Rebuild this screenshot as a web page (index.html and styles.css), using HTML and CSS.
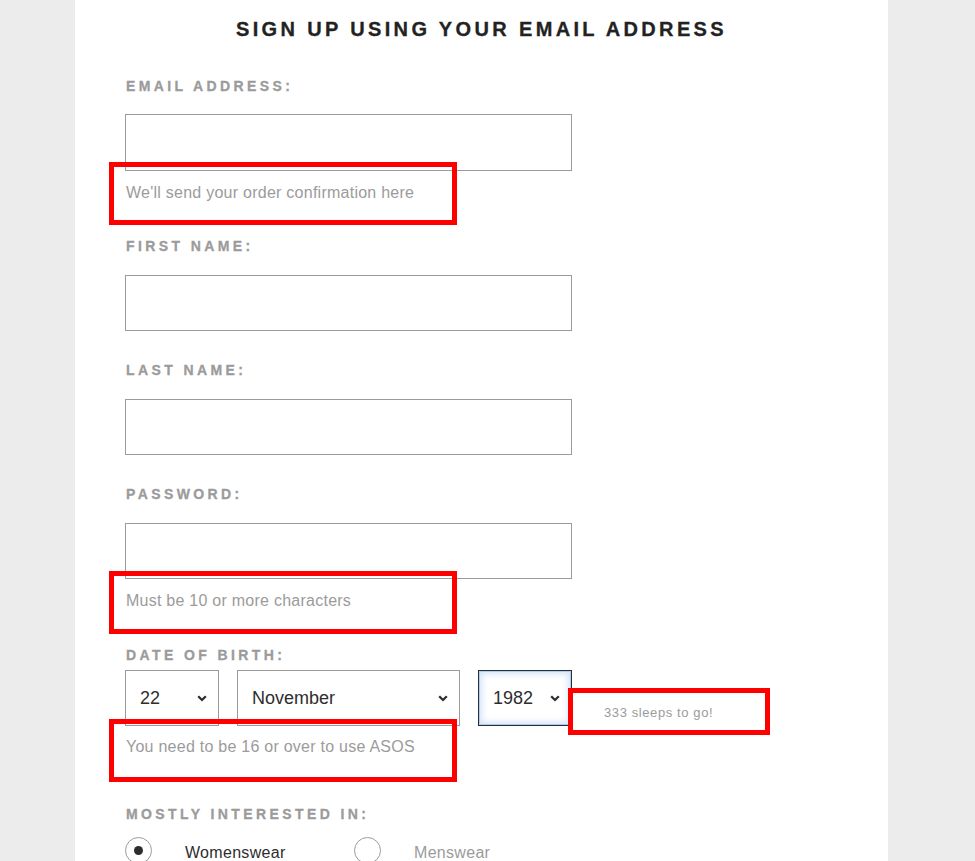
FILE: index.html
```html
<!DOCTYPE html>
<html lang="en">
<head>
<meta charset="utf-8">
<title>Sign up</title>
<link rel="stylesheet" href="styles.css">
</head>
<body>
<div class="panel">
  <h1 class="title">SIGN UP USING YOUR EMAIL ADDRESS</h1>

  <div class="field field-email">
    <div class="label">EMAIL ADDRESS:</div>
    <div class="input"></div>
    <div class="hint hint-email">We'll send your order confirmation here</div>
  </div>

  <div class="field field-first">
    <div class="label">FIRST NAME:</div>
    <div class="input"></div>
  </div>

  <div class="field field-last">
    <div class="label">LAST NAME:</div>
    <div class="input"></div>
  </div>

  <div class="field field-pass">
    <div class="label">PASSWORD:</div>
    <div class="input"></div>
    <div class="hint hint-pass">Must be 10 or more characters</div>
  </div>

  <div class="field field-dob">
    <div class="label">DATE OF BIRTH:</div>
    <div class="dob-row">
      <div class="selects">
        <div class="select"><span>22</span><svg class="chev" width="10" height="7" viewBox="0 0 10 7"><path d="M1.2 1.3 L5 5 L8.8 1.3" fill="none" stroke="#2d2d2d" stroke-width="2.3"/></svg></div>
        <div class="select"><span>November</span><svg class="chev" width="10" height="7" viewBox="0 0 10 7"><path d="M1.2 1.3 L5 5 L8.8 1.3" fill="none" stroke="#2d2d2d" stroke-width="2.3"/></svg></div>
        <div class="select select-focus"><span>1982</span><svg class="chev" width="10" height="7" viewBox="0 0 10 7"><path d="M1.2 1.3 L5 5 L8.8 1.3" fill="none" stroke="#2d2d2d" stroke-width="2.3"/></svg></div>
      </div>
      <span class="sleeps">333 sleeps to go!</span>
    </div>
    <div class="hint hint-dob">You need to be 16 or over to use ASOS</div>
  </div>

  <div class="field field-interest">
    <div class="label">MOSTLY INTERESTED IN:</div>
    <div class="radios">
      <div class="radio-opt"><span class="radio radio-on"></span><span class="radio-text">Womenswear</span></div>
      <div class="radio-opt"><span class="radio"></span><span class="radio-text radio-text-off">Menswear</span></div>
    </div>
  </div>

  <div class="mark mark-1"></div>
  <div class="mark mark-2"></div>
  <div class="mark mark-3"></div>
  <div class="mark mark-4"></div>
</div>
</body>
</html>
```

FILE: styles.css
```css
html, body {
  margin: 0;
  padding: 0;
}
body {
  background: #ececec;
  font-family: "Liberation Sans", Arial, sans-serif;
  color: #2d2d2d;
  height: 861px;
  overflow: hidden;
}
.panel {
  position: relative;
  margin-left: 75px;
  width: 813px;
  height: 861px;
  overflow: hidden;
  background: #fff;
  padding: 17px 50px 0 50px;
  box-sizing: border-box;
}
.title {
  margin: 0;
  text-align: center;
  font-size: 20px;
  line-height: 24px;
  font-weight: bold;
  letter-spacing: 3.35px;
  color: #222;
  -webkit-text-stroke: 0.3px #222;
}
.field {
  width: 447px;
}
.field-email { margin-top: 35px; }
.field-first { margin-top: 33px; }
.field-last { margin-top: 29px; }
.field-pass { margin-top: 29px; }
.field-dob { margin-top: 34px; }
.field-interest { margin-top: 47px; }

.label {
  font-size: 14px;
  line-height: 20px;
  height: 20px;
  font-weight: bold;
  letter-spacing: 3.4px;
  color: #9b9b9b;
  padding-left: 1px;
  -webkit-text-stroke: 0.3px #9b9b9b;
  white-space: nowrap;
}
.input {
  margin-top: 18px;
  border: 1px solid #9b9b9b;
  box-sizing: border-box;
  height: 57px;
}
.field-first .input, .field-last .input, .field-pass .input {
  margin-top: 19px;
  height: 56px;
}
.hint {
  font-size: 16px;
  line-height: 20px;
  letter-spacing: 0.25px;
  color: #9b9b9b;
  padding-left: 1px;
  white-space: nowrap;
}
.hint-email { margin-top: 12px; }
.hint-pass { margin-top: 12px; }
.hint-dob { margin-top: 11px; }

.dob-row {
  margin-top: 5px;
  display: flex;
  align-items: flex-end;
  width: 700px;
}
.selects {
  display: grid;
  grid-template-columns: 94px 1fr 94px;
  column-gap: 18px;
  width: 447px;
  flex: none;
}
.select {
  height: 56px;
  border: 1px solid #9b9b9b;
  box-sizing: border-box;
  display: flex;
  align-items: center;
  justify-content: space-between;
  padding: 0 11px 0 14px;
  font-size: 18px;
  color: #2d2d2d;
}
.chev {
  display: block;
  flex: none;
}
.select-focus {
  border-color: #2d2d2d;
  box-shadow: inset 0 0 0 1px #a9cdf3, inset 0 0 6px 3px #d2e5fa;
}
.sleeps {
  margin-left: 32px;
  margin-bottom: 5px;
  font-size: 13px;
  line-height: 16px;
  color: #9b9b9b;
  letter-spacing: 0.6px;
  white-space: nowrap;
}

.radios {
  margin-top: 13px;
  display: flex;
  width: 600px;
}
.radio-opt {
  width: 229px;
  flex: none;
  display: flex;
  align-items: center;
}
.radio {
  width: 27px;
  height: 27px;
  border: 1px solid #9b9b9b;
  border-radius: 50%;
  box-sizing: border-box;
  display: flex;
  align-items: center;
  justify-content: center;
  flex: none;
}
.radio-on::after {
  content: "";
  width: 9px;
  height: 9px;
  border-radius: 50%;
  background: #2d2d2d;
}
.radio-text {
  margin-left: 33px;
  font-size: 16px;
  letter-spacing: 0.3px;
  color: #2d2d2d;
  position: relative;
  top: 2px;
}
.radio-text-off {
  color: #9b9b9b;
}

.mark {
  position: absolute;
  border: 5px solid #ff0000;
  box-sizing: border-box;
}
.mark-1 { left: 34px; top: 162px; width: 348px; height: 63px; }
.mark-2 { left: 34px; top: 571px; width: 348px; height: 63px; }
.mark-3 { left: 34px; top: 719px; width: 348px; height: 63px; }
.mark-4 { left: 493px; top: 688px; width: 202px; height: 47px; }
```
